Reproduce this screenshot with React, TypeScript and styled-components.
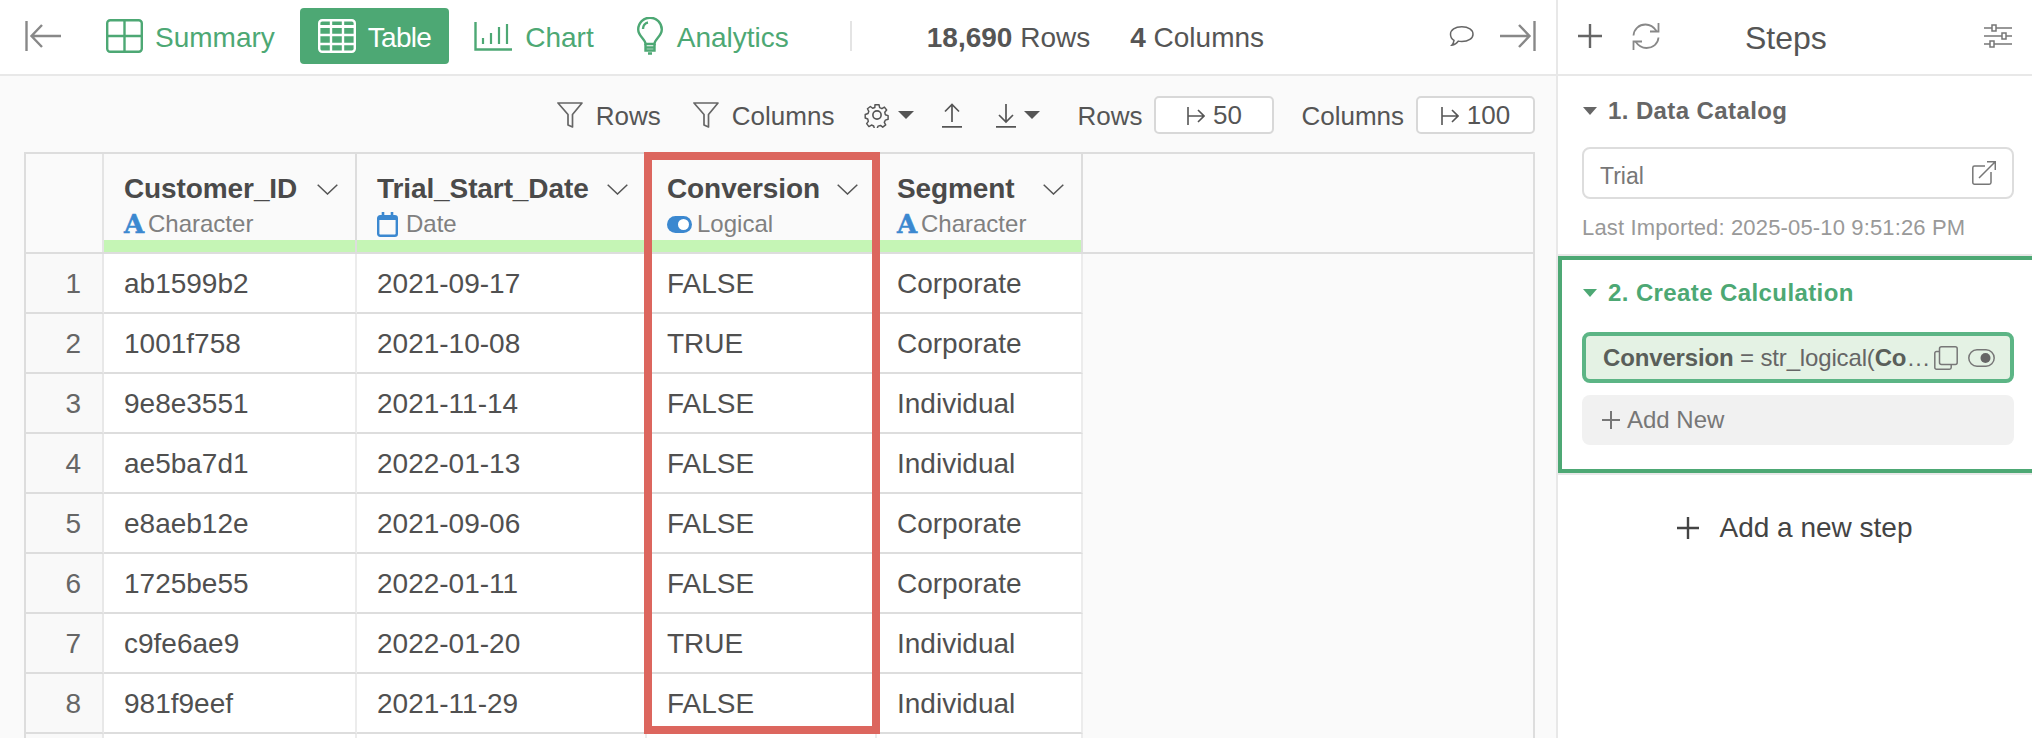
import React from "react";
import styled, { createGlobalStyle } from "styled-components";

const Global = createGlobalStyle`
  html, body { margin: 0; padding: 0; height: 738px; overflow: hidden; background: #fff; }
  * { box-sizing: border-box; }
  body { font-family: "Liberation Sans", Arial, sans-serif; color: #555; }
`;

const GREEN = "#4da874";

const Page = styled.div`
  display: flex;
  width: 2032px;
  height: 738px;
  overflow: hidden;
`;
const Main = styled.div`
  width: 1556px;
  flex: none;
  display: flex;
  flex-direction: column;
  background: #fafafa;
`;
const TopBar = styled.div`
  height: 76px;
  flex: none;
  display: flex;
  align-items: center;
  padding: 0 20px 2px 25px;
  background: #fff;
  border-bottom: 2px solid #e8e8e8;
`;
const IconSlot = styled.span<{ $ml?: number }>`
  display: inline-flex;
  flex: none;
  margin-left: ${(p) => p.$ml ?? 0}px;
  svg { display: block; }
`;
const Tabs = styled.div`
  display: flex;
  gap: 7px;
  margin-left: 27px;
`;
const Tab = styled.div<{ $active?: boolean; $ml?: number; $gap?: number }>`
  height: 56px;
  display: flex;
  align-items: center;
  gap: ${(p) => p.$gap ?? 12}px;
  margin-left: ${(p) => p.$ml ?? 0}px;
  padding: 0 18px;
  border-radius: 4px;
  font-size: 28px;
  color: ${(p) => (p.$active ? "#fff" : GREEN)};
  background: ${(p) => (p.$active ? GREEN : "transparent")};
`;
const TabLabel = styled.span<{ $tight?: boolean }>`
  padding-top: 3px;
  letter-spacing: ${(p) => (p.$tight ? "-0.7px" : "0")};
`;
const Separator = styled.div`
  width: 2px;
  height: 30px;
  background: #e4e4e4;
  margin-left: 43px;
`;
const Stat = styled.div<{ $ml: number }>`
  font-size: 28px;
  color: #555;
  padding-top: 4px;
  margin-left: ${(p) => p.$ml}px;
  b { font-weight: 700; }
`;
const Spacer = styled.div`
  flex: 1;
`;
const Toolbar = styled.div`
  height: 76px;
  flex: none;
  display: flex;
  align-items: center;
  justify-content: flex-end;
  padding: 2px 21px 0 0;
  font-size: 26px;
  color: #555;
`;
const ToolLabel = styled.span<{ $ml?: number }>`
  margin-left: ${(p) => p.$ml ?? 0}px;
  padding-top: 2px;
`;
const LimitBox = styled.div<{ $w: number }>`
  width: ${(p) => p.$w}px;
  height: 38px;
  margin-left: 12px;
  padding-top: 1px;
  display: flex;
  align-items: center;
  justify-content: center;
  gap: 8px;
  background: #fff;
  border: 2px solid #d8d8d8;
  border-radius: 5px;
  font-size: 26px;
  color: #555;
`;
const TableWrap = styled.div`
  position: relative;
  margin-left: 24px;
  width: 1511px;
  flex: 1;
  border: 2px solid #ddd;
  border-bottom: 0;
`;
const HeaderRow = styled.div`
  display: flex;
  height: 100px;
  border-bottom: 2px solid #ddd;
`;
const Row = styled.div`
  display: flex;
  height: 60px;
`;
const RowNumHead = styled.div`
  width: 78px;
  flex: none;
  background: #fafafa;
  border-right: 2px solid #e4e4e4;
`;
const RowNum = styled.div`
  width: 78px;
  flex: none;
  display: flex;
  align-items: center;
  justify-content: flex-end;
  padding: 2px 21px 0 0;
  background: #f9f9f9;
  border-right: 2px solid #e8e8e8;
  border-bottom: 2px solid #ddd;
  font-size: 28px;
  color: #666;
`;
const HeadCell = styled.div<{ $w: number }>`
  width: ${(p) => p.$w}px;
  flex: none;
  display: flex;
  flex-direction: column;
  background: #fafafa;
  border-right: 2px solid #ddd;
`;
const HeadBody = styled.div`
  flex: 1;
  padding: 17px 17px 0 20px;
`;
const HeadTop = styled.div`
  display: flex;
  align-items: center;
  justify-content: space-between;
  font-size: 28px;
  font-weight: 700;
  line-height: 36px;
  letter-spacing: -0.1px;
  color: #4a4a4a;
`;
const HeadType = styled.div<{ $gap: number }>`
  display: flex;
  align-items: center;
  gap: ${(p) => p.$gap}px;
  height: 28px;
  margin-top: 3px;
  font-size: 24px;
  color: #808080;
`;
const TypeLetter = styled.span`
  font-family: "DejaVu Serif", "Liberation Serif", serif;
  font-weight: 700;
  font-size: 26px;
  line-height: 28px;
  width: 19px;
  color: #3b88d0;
  display: inline-block;
  text-align: center;
  -webkit-text-stroke: 0.5px #3b88d0;
`;
const GreenBar = styled.div`
  height: 12px;
  background: #c5f5b5;
`;
const Cell = styled.div<{ $w: number }>`
  width: ${(p) => p.$w}px;
  flex: none;
  display: flex;
  align-items: center;
  padding: 2px 0 0 20px;
  background: #fff;
  border-right: 2px solid #ececec;
  border-bottom: 2px solid #ddd;
  font-size: 28px;
  color: #505050;
`;
const Highlight = styled.div`
  position: absolute;
  left: 618px;
  top: -2px;
  width: 236px;
  height: 582px;
  border: 8px solid #dc665e;
  pointer-events: none;
`;
const Side = styled.div`
  width: 476px;
  flex: none;
  display: flex;
  flex-direction: column;
  overflow: hidden;
  background: #fff;
  border-left: 2px solid #e8e8e8;
`;
const SideHead = styled.div`
  height: 76px;
  flex: none;
  display: flex;
  align-items: center;
  padding: 0 20px 2px 20px;
  border-bottom: 2px solid #e8e8e8;
`;
const SideTitle = styled.div`
  font-size: 32px;
  color: #555;
  margin-left: 85px;
  padding-top: 4px;
`;
const Section = styled.div`
  height: 180px;
  flex: none;
  padding: 17px 18px 0 24px;
  border-bottom: 2px solid #e8e8e8;
`;
const SectionTitle = styled.div<{ $green?: boolean }>`
  display: flex;
  align-items: center;
  gap: 11px;
  height: 36px;
  font-size: 24px;
  font-weight: 700;
  letter-spacing: 0.4px;
  color: ${(p) => (p.$green ? GREEN : "#666")};
`;
const CaretSmall = styled.span`
  width: 0;
  height: 0;
  margin-left: 1px;
  border-left: 7px solid transparent;
  border-right: 7px solid transparent;
  border-top: 8px solid currentColor;
  flex: none;
`;
const SourceBox = styled.div`
  height: 52px;
  margin-top: 18px;
  display: flex;
  align-items: center;
  justify-content: space-between;
  padding: 0 16px;
  border: 2px solid #ddd;
  border-radius: 8px;
  font-size: 23px;
  color: #777;
`;
const SourceName = styled.span`
  padding-top: 7px;
`;
const Imported = styled.div`
  margin-top: 16px;
  height: 26px;
  line-height: 26px;
  font-size: 22px;
  letter-spacing: 0.15px;
  color: #999;
`;
const ActiveSection = styled.div`
  width: 478px;
  height: 217px;
  flex: none;
  padding: 15px 18px 0 20px;
  border: 4px solid ${GREEN};
`;
const ActiveFoot = styled.div`
  height: 2px;
  flex: none;
  background: #e8e8e8;
`;
const Chip = styled.div`
  height: 51px;
  margin-top: 21px;
  display: flex;
  align-items: center;
  padding: 0 15px 0 17px;
  background: #e4f2e4;
  border: 4px solid #5cb585;
  border-radius: 8px;
  font-size: 24px;
  color: #666;
`;
const ChipText = styled.div`
  width: 328px;
  flex: none;
  white-space: nowrap;
  letter-spacing: -0.15px;
  b { color: #5a5f5a; font-weight: 700; }
`;
const AddNew = styled.div`
  height: 50px;
  margin-top: 12px;
  display: flex;
  align-items: center;
  gap: 7px;
  padding-left: 20px;
  background: #f1f1f1;
  border-radius: 8px;
  font-size: 24px;
  color: #777;
`;
const AddStep = styled.div`
  margin-top: 33px;
  display: flex;
  align-items: center;
  justify-content: center;
  gap: 20px;
  font-size: 28px;
  line-height: 40px;
  color: #444;
`;

const BackIcon = () => (
  <svg width="36" height="30" viewBox="0 0 36 30" fill="none" stroke="#888" strokeWidth="2.4">
    <path d="M1.5 0v30" />
    <path d="M36 15H7M17 4 6.5 15 17 26" />
  </svg>
);
const ForwardIcon = () => (
  <svg width="36" height="30" viewBox="0 0 36 30" fill="none" stroke="#888" strokeWidth="2.4">
    <path d="M34.5 0v30" />
    <path d="M0 15h29M19 4l10.5 11L19 26" />
  </svg>
);
const SummaryIcon = () => (
  <svg width="37" height="34" viewBox="0 0 37 34" fill="none" stroke={GREEN} strokeWidth="2.4">
    <rect x="1.2" y="1.2" width="34.6" height="31.6" rx="3" />
    <path d="M18.5 1v32M1 17h35" />
  </svg>
);
const TableIcon = () => (
  <svg width="38" height="34" viewBox="0 0 38 34" fill="none" stroke="#fff" strokeWidth="2.4">
    <rect x="1.2" y="1.2" width="35.6" height="31.6" rx="3" />
    <path d="M1 7.5h36" strokeWidth="3" />
    <path d="M1 16h36M1 25h36M13 1v32M25 1v32" />
  </svg>
);
const ChartIcon = () => (
  <svg width="38" height="30" viewBox="0 0 38 30" fill="none" stroke={GREEN} strokeWidth="2.2">
    <path d="M1.5 1v27.5H38" strokeWidth="2.4" />
    <path d="M9 17v6M17 12v11M25 6v17M33 3v20" />
  </svg>
);
const BulbIcon = () => (
  <svg width="26" height="38" viewBox="0 0 26 38" fill="none" stroke={GREEN} strokeWidth="2.4">
    <path d="M8.5 27c0-5-7.3-7.500-7.300-14.500a11.800 11.800 0 0 1 23.600 0C24.800 19.500 17.500 22 17.500 27z" />
    <path d="M6 12c0-3 2-6 5-6.500" />
    <path d="M8.500 27v6.500h9V27M8.500 30.500h9M11 36.500h4" />
  </svg>
);
const FunnelIcon = () => (
  <svg width="26" height="26" viewBox="0 0 26 26" fill="none" stroke="#666" strokeWidth="1.700">
    <path d="M1 1h24l-9.500 11.500V25l-4.500-2V12.500z" strokeLinejoin="round" />
  </svg>
);
const GearIcon = () => (
  <svg width="26" height="26" viewBox="0 0 24 24" fill="none" stroke="#555" strokeWidth="1.500" strokeLinejoin="round">
    <path d="M9.900 1.500h4.200l.6 3 2.300 1 2.600-1.600 2.300 3-1.900 2.300.5 2.500 2.900 1v3.600l-2.900 1-1 2.300 1.400 2.600-3 2.300-2.300-1.800-2.500.7-1 2.600H9.300l-.7-2.700-2.300-1-2.600 1.600-2.300-3 1.700-2.400-.6-2.400-2.600-1v-3.600l2.900-1 .8-2.300-1.400-2.600 3-2.300 2.300 1.800 2.300-.8z" transform="translate(1.200 1.200) scale(.9)" />
    <circle cx="12" cy="12" r="3.800" />
  </svg>
);
const Caret = styled.span<{ $ml: number }>`
  width: 0;
  height: 0;
  flex: none;
  margin-left: ${(p) => p.$ml}px;
  border-left: 8px solid transparent;
  border-right: 8px solid transparent;
  border-top: 8px solid #555;
`;
const UpIcon = () => (
  <svg width="20" height="25" viewBox="0 0 20 25" fill="none" stroke="#555" strokeWidth="1.700">
    <path d="M0 23.800h20M10 19V1.500M3 8.500l7-7 7 7" />
  </svg>
);
const DownIcon = () => (
  <svg width="20" height="25" viewBox="0 0 20 25" fill="none" stroke="#555" strokeWidth="1.700">
    <path d="M0 23.800h20M10 1v18M3 12l7 7 7-7" />
  </svg>
);
const LimitIcon = () => (
  <svg width="18" height="20" viewBox="0 0 18 20" fill="none" stroke="#555" strokeWidth="1.600">
    <path d="M1 1v18M1 10h16M11 4l6 6-6 6" />
  </svg>
);
const Chevron = () => (
  <svg width="21" height="11" viewBox="0 0 21 11" fill="none" stroke="#555" strokeWidth="1.500">
    <path d="M.7.7 10.500 10 20.300.7" />
  </svg>
);
const CalendarIcon = () => (
  <svg width="21" height="25" viewBox="0 0 21 25" fill="none" stroke="#3b88d0">
    <rect x="1.200" y="4.200" width="18.600" height="19.600" rx="2" strokeWidth="2.400" />
    <path d="M1 6h19" strokeWidth="4" />
    <path d="M6 0v5M15 0v5" strokeWidth="2.600" />
  </svg>
);
const LogicalIcon = () => (
  <svg width="25" height="17" viewBox="0 0 25 17">
    <rect width="25" height="17" rx="8.500" fill="#3b88d0" />
    <circle cx="16.500" cy="8.500" r="5.500" fill="#fff" />
  </svg>
);
const PlusIcon = ({ s, c, w = 2 }: { s: number; c: string; w?: number }) => (
  <svg width={s} height={s} viewBox={`0 0 ${s} ${s}`} fill="none" stroke={c} strokeWidth={w}>
    <path d={`M${s / 2} 0v${s}M0 ${s / 2}h${s}`} />
  </svg>
);
const RefreshIcon = () => (
  <svg width="28" height="27" viewBox="0 0 28 27" fill="none" stroke="#888" strokeWidth="1.800">
    <path d="M1.500 12.500C2 6 7 1.500 13.500 1.500c4.500 0 8 2 11 6.500" />
    <path d="M26.500 0v8.500h-8.500" />
    <path d="M26.500 14.500C26 21 21 25 14.500 25c-4.500 0-8-2-11-6.500" />
    <path d="M1.500 27v-8.500h8.500" />
  </svg>
);
const SlidersIcon = () => (
  <svg width="28" height="24" viewBox="0 0 28 24" fill="none" stroke="#777" strokeWidth="1.500">
    <path d="M0 4h8M12 4h16M0 12h18M22 12h6M0 20h6M10 20h18" />
    <rect x="8" y="1" width="4" height="6" fill="#fff" />
    <rect x="18" y="9" width="4" height="6" fill="#fff" />
    <rect x="6" y="17" width="4" height="6" fill="#fff" />
  </svg>
);
const ExternalIcon = () => (
  <svg width="24" height="24" viewBox="0 0 24 24" fill="none" stroke="#777" strokeWidth="1.500">
    <path d="M13 5H2.500A1.700 1.700 0 0 0 .8 6.700v14.800a1.700 1.700 0 0 0 1.700 1.700h14.800a1.700 1.700 0 0 0 1.700-1.700V11" />
    <path d="M7 17 23.500.5M15 .7h8.300V9" />
  </svg>
);
const CopyIcon = () => (
  <svg width="24" height="24" viewBox="0 0 24 24" fill="none" stroke="#777" strokeWidth="1.500">
    <rect x="5.500" y=".8" width="17.700" height="17.700" rx="2" />
    <path d="M5.500 5.500H2.500A1.700 1.700 0 0 0 .8 7.200v14.300a1.700 1.700 0 0 0 1.700 1.700h13a1.700 1.700 0 0 0 1.700-1.700v-3" />
  </svg>
);
const EyeToggleIcon = () => (
  <svg width="27" height="18" viewBox="0 0 27 18" fill="none">
    <rect x=".8" y=".8" width="25.400" height="16.400" rx="8.200" stroke="#777" strokeWidth="1.500" />
    <circle cx="17.500" cy="9" r="5" fill="#666" />
  </svg>
);
const CommentIcon = () => (
  <svg width="26" height="20" viewBox="0 0 26 20" fill="none" stroke="#666" strokeWidth="1.500">
    <path d="M6 14.400C3.800 13 2.500 10.800 2.500 8.200 2.500 4 7 .8 13.800.8S25 4 25 8.200s-4.600 7.300-11.200 7.300c-1.300 0-2.500-.1-3.500-.4C8.800 17.300 6.800 18.800 3.800 19.200c1.400-1.500 2-3 2.200-4.800z" />
  </svg>
);

type TypeKind = "char" | "date" | "logical";
const columns: { name: string; w: number; type: string; kind: TypeKind }[] = [
  { name: "Customer_ID", w: 253, type: "Character", kind: "char" },
  { name: "Trial_Start_Date", w: 290, type: "Date", kind: "date" },
  { name: "Conversion", w: 230, type: "Logical", kind: "logical" },
  { name: "Segment", w: 206, type: "Character", kind: "char" },
];
const rows = [
  ["ab1599b2", "2021-09-17", "FALSE", "Corporate"],
  ["1001f758", "2021-10-08", "TRUE", "Corporate"],
  ["9e8e3551", "2021-11-14", "FALSE", "Individual"],
  ["ae5ba7d1", "2022-01-13", "FALSE", "Individual"],
  ["e8aeb12e", "2021-09-06", "FALSE", "Corporate"],
  ["1725be55", "2022-01-11", "FALSE", "Corporate"],
  ["c9fe6ae9", "2022-01-20", "TRUE", "Individual"],
  ["981f9eef", "2021-11-29", "FALSE", "Individual"],
  ["", "", "", ""],
];

const TypeIcon = ({ kind }: { kind: TypeKind }) =>
  kind === "char" ? <TypeLetter>A</TypeLetter> : kind === "date" ? <CalendarIcon /> : <LogicalIcon />;

export default function App() {
  return (
    <Page>
      <Global />
      <Main>
        <TopBar>
          <IconSlot><BackIcon /></IconSlot>
          <Tabs>
            <Tab><SummaryIcon /><TabLabel>Summary</TabLabel></Tab>
            <Tab $active><TableIcon /><TabLabel $tight>Table</TabLabel></Tab>
            <Tab $gap={13}><ChartIcon /><TabLabel>Chart</TabLabel></Tab>
            <Tab $ml={0} $gap={14}><BulbIcon /><TabLabel>Analytics</TabLabel></Tab>
          </Tabs>
          <Separator />
          <Stat $ml={75}><b>18,690</b> Rows</Stat>
          <Stat $ml={40}><b>4</b> Columns</Stat>
          <Spacer />
          <IconSlot><CommentIcon /></IconSlot>
          <IconSlot $ml={26}><ForwardIcon /></IconSlot>
        </TopBar>
        <Toolbar>
          <IconSlot><FunnelIcon /></IconSlot>
          <ToolLabel $ml={13}>Rows</ToolLabel>
          <IconSlot $ml={32}><FunnelIcon /></IconSlot>
          <ToolLabel $ml={13}>Columns</ToolLabel>
          <IconSlot $ml={30}><GearIcon /></IconSlot>
          <Caret $ml={8} />
          <IconSlot $ml={28}><UpIcon /></IconSlot>
          <IconSlot $ml={34}><DownIcon /></IconSlot>
          <Caret $ml={8} />
          <ToolLabel $ml={37}>Rows</ToolLabel>
          <LimitBox $w={120}><LimitIcon />50</LimitBox>
          <ToolLabel $ml={27}>Columns</ToolLabel>
          <LimitBox $w={119}><LimitIcon />100</LimitBox>
        </Toolbar>
        <TableWrap>
          <HeaderRow>
            <RowNumHead />
            {columns.map((c) => (
              <HeadCell key={c.name} $w={c.w}>
                <HeadBody>
                  <HeadTop>{c.name}<Chevron /></HeadTop>
                  <HeadType $gap={c.kind === "date" ? 8 : 5}><TypeIcon kind={c.kind} />{c.type}</HeadType>
                </HeadBody>
                <GreenBar />
              </HeadCell>
            ))}
          </HeaderRow>
          {rows.map((r, i) => (
            <Row key={i}>
              <RowNum>{r[0] ? i + 1 : ""}</RowNum>
              {r.map((v, j) => (
                <Cell key={j} $w={columns[j].w}>{v}</Cell>
              ))}
            </Row>
          ))}
          <Highlight />
        </TableWrap>
      </Main>
      <Side>
        <SideHead>
          <IconSlot><PlusIcon s={24} c="#666" w={2.4} /></IconSlot>
          <IconSlot $ml={30}><RefreshIcon /></IconSlot>
          <SideTitle>Steps</SideTitle>
          <Spacer />
          <IconSlot><SlidersIcon /></IconSlot>
        </SideHead>
        <Section>
          <SectionTitle><CaretSmall />1. Data Catalog</SectionTitle>
          <SourceBox><SourceName>Trial</SourceName><ExternalIcon /></SourceBox>
          <Imported>Last Imported: 2025-05-10 9:51:26 PM</Imported>
        </Section>
        <ActiveSection>
          <SectionTitle $green><CaretSmall />2. Create Calculation</SectionTitle>
          <Chip>
            <ChipText><b>Conversion</b> = str_logical(<b>Co</b>…</ChipText>
            <IconSlot $ml={3}><CopyIcon /></IconSlot>
            <IconSlot $ml={10}><EyeToggleIcon /></IconSlot>
          </Chip>
          <AddNew><PlusIcon s={18} c="#777" />Add New</AddNew>
        </ActiveSection>
        <ActiveFoot />
        <AddStep><PlusIcon s={22} c="#444" w={2.400} />Add a new step</AddStep>
      </Side>
    </Page>
  );
}
